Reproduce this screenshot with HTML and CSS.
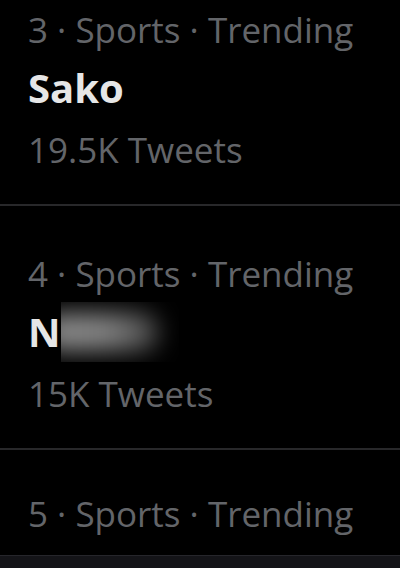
FILE: index.html
```html
<!DOCTYPE html>
<html>
<head>
<meta charset="utf-8">
<link rel="stylesheet" href="styles.css">
</head>
<body>
<div class="list">
  <div class="trend">
    <div class="meta">3 · Sports · Trending</div>
    <div class="name">Sako</div>
    <div class="count">19.5K Tweets</div>
  </div>
  <div class="trend">
    <div class="meta">4 · Sports · Trending</div>
    <div class="name">N<span class="redact"><span class="blur"></span></span></div>
    <div class="count">15K Tweets</div>
  </div>
  <div class="trend last">
    <div class="meta">5 · Sports · Trending</div>
  </div>
  <div class="bottombar"></div>
</div>
</body>
</html>
```

FILE: styles.css
```css
html, body {
  margin: 0;
  padding: 0;
  background: #000;
  width: 400px;
  height: 568px;
  overflow: hidden;
}
body {
  font-family: "Open Sans", "Noto Sans", sans-serif;
}
.list {
  margin-top: -38px;
}
.trend {
  padding: 45px 28px 31px;
  border-bottom: 2px solid #28282a;
}
.trend.last {
  padding-top: 41px;
  padding-bottom: 18px;
  border-bottom: 1px solid #26262b;
}
.meta, .count {
  font-size: 35px;
  line-height: 46px;
  color: #636569;
  white-space: nowrap;
}
.name {
  margin-top: 5px;
  height: 60px;
  font-size: 40px;
  line-height: 60px;
  font-weight: 700;
  color: #e6e6e6;
  display: flex;
  align-items: center;
}
.count {
  margin-top: 9px;
}
.redact {
  display: inline-flex;
  align-items: center;
  width: 118px;
  height: 60px;
  overflow: hidden;
}
.blur {
  display: block;
  flex: none;
  width: 118px;
  height: 38px;
  margin-left: -20px;
  background: linear-gradient(90deg, #8c8c8c 0%, #858585 55%, #444 100%);
  border-radius: 18px;
  filter: blur(12px);
}
.bottombar {
  height: 20px;
  background: #141418;
}
```
